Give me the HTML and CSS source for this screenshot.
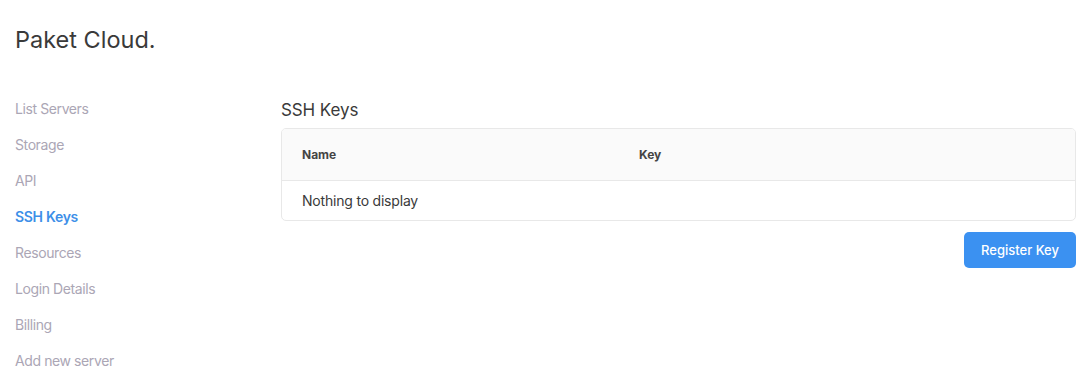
FILE: index.html
```html
<!DOCTYPE html>
<html>
<head>
<meta charset="utf-8">
<link rel="stylesheet" href="styles.css">
</head>
<body>
<div class="page">
  <header class="brand">Paket Cloud.</header>
  <div class="layout">
    <nav class="sidebar">
      <a class="nav-item">List Servers</a>
      <a class="nav-item">Storage</a>
      <a class="nav-item">API</a>
      <a class="nav-item active">SSH Keys</a>
      <a class="nav-item">Resources</a>
      <a class="nav-item">Login Details</a>
      <a class="nav-item">Billing</a>
      <a class="nav-item">Add new server</a>
    </nav>
    <main class="content">
      <h2 class="section-title">SSH Keys</h2>
      <div class="table-card">
        <div class="row head">
          <div class="col-name">Name</div>
          <div class="col-key">Key</div>
        </div>
        <div class="row body">
          <div class="col-name">Nothing to display</div>
        </div>
      </div>
      <div class="actions">
        <button class="btn-primary">Register Key</button>
      </div>
    </main>
  </div>
</div>
</body>
</html>
```
FILE: styles.css
```css
* { box-sizing: border-box; }
html, body { margin: 0; padding: 0; background: #fff; }
body {
  font-family: Inter, "Noto Sans", "Liberation Sans", sans-serif;
  color: #333;
}
.page { padding: 26px 15px 0 15px; }
.brand {
  font-size: 23.5px;
  line-height: 28px;
  color: #3a3a3a;
  font-weight: 400;
  letter-spacing: 0;
}
.layout {
  display: flex;
  margin-top: 37px;
}
.sidebar {
  width: 266px;
  flex: 0 0 266px;
  display: flex;
  flex-direction: column;
}
.nav-item {
  font-size: 14px;
  line-height: 36px;
  color: #aba6b5;
  letter-spacing: -0.4px;
}
.nav-item.active {
  color: #3d8fe8;
  font-weight: 600;
  letter-spacing: -0.3px;
}
.content {
  flex: 1;
  padding-top: 7px;
}
.section-title {
  margin: 0 0 6px 0;
  font-size: 17px;
  line-height: 24px;
  font-weight: 400;
  color: #3a3a3a;
  letter-spacing: -0.1px;
}
.table-card {
  border: 1px solid #e8e8e8;
  border-radius: 5px;
  overflow: hidden;
}
.row {
  display: flex;
  align-items: center;
  padding-left: 20px;
}
.row.head {
  height: 52px;
  background: #fafafa;
  border-bottom: 1px solid #e8e8e8;
  font-size: 12px;
  font-weight: 700;
  color: #444;
}
.row.body {
  height: 39px;
  font-size: 14px;
  color: #3a3a3a;
  letter-spacing: -0.2px;
  padding-bottom: 1px;
}
.col-name { width: 337px; }
.actions {
  display: flex;
  justify-content: flex-end;
  margin-top: 11px;
}
.btn-primary {
  width: 112px;
  height: 36px;
  border: 0;
  border-radius: 5px;
  background: #3b91f1;
  color: #fff;
  font-family: Inter, "Noto Sans", "Liberation Sans", sans-serif;
  font-size: 13px;
  font-weight: 500;
  padding: 0;
}
```
